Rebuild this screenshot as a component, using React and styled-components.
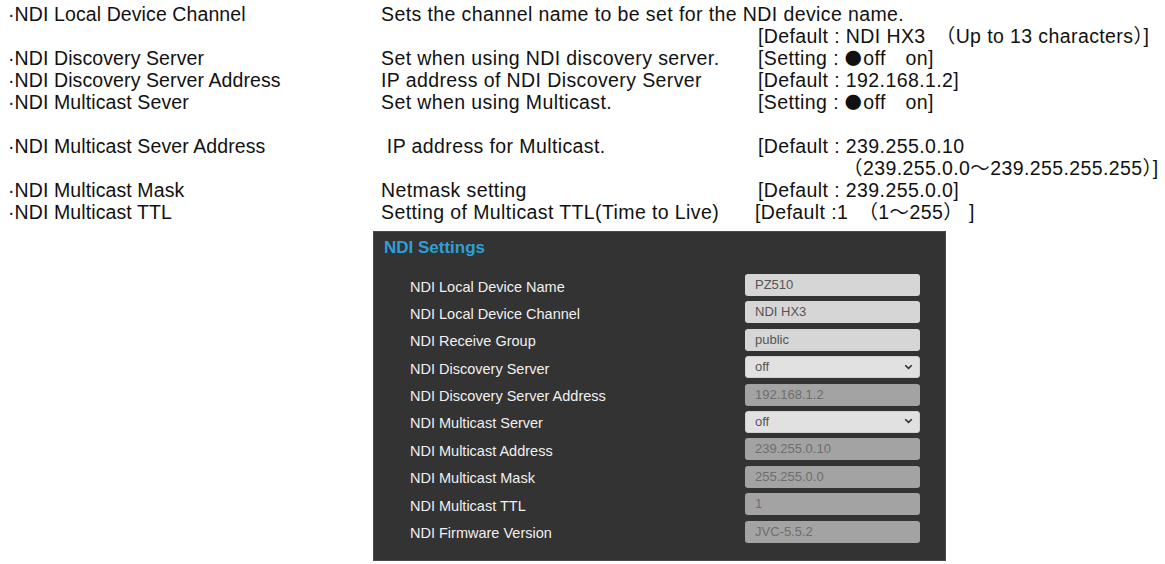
import React from 'react';
import styled, { createGlobalStyle } from 'styled-components';

const GlobalStyle = createGlobalStyle`
  body {
    margin: 0;
    background: #ffffff;
    font-family: 'Liberation Sans', Arial, sans-serif;
  }
`;

const Bullet = styled.span`
  font-family: 'Noto Sans CJK JP', sans-serif;
  font-size: 17px;
  margin-right: 1px;
`;

const onOff = (
  <>
    [Setting : <Bullet>●</Bullet>off　on]
  </>
);

const specRows = [
  { name: '·NDI Local Device Channel', desc: 'Sets the channel name to be set for the NDI device name.', value: '', wide: true },
  { name: '', desc: '', value: '[Default : NDI HX3　（Up to 13 characters）]' },
  { name: '·NDI Discovery Server', desc: 'Set when using NDI discovery server.', value: onOff },
  { name: '·NDI Discovery Server Address', desc: 'IP address of NDI Discovery Server', value: '[Default : 192.168.1.2]' },
  { name: '·NDI Multicast Sever', desc: 'Set when using Multicast.', value: onOff },
  { name: '', desc: '', value: '' },
  { name: '·NDI Multicast Sever Address', desc: ' IP address for Multicast.', value: '[Default : 239.255.0.10' },
  { name: '', desc: '', value: '（239.255.0.0～239.255.255.255）]', cont: true },
  { name: '·NDI Multicast Mask', desc: 'Netmask setting', value: '[Default : 239.255.0.0]' },
  { name: '·NDI Multicast TTL', desc: 'Setting of Multicast TTL(Time to Live)', value: '[Default :1　（1～255） ]', shift: true },
];

const settings = [
  { label: 'NDI Local Device Name', value: 'PZ510', kind: 'text' },
  { label: 'NDI Local Device Channel', value: 'NDI HX3', kind: 'text' },
  { label: 'NDI Receive Group', value: 'public', kind: 'text' },
  { label: 'NDI Discovery Server', value: 'off', kind: 'select' },
  { label: 'NDI Discovery Server Address', value: '192.168.1.2', kind: 'disabled' },
  { label: 'NDI Multicast Server', value: 'off', kind: 'select' },
  { label: 'NDI Multicast Address', value: '239.255.0.10', kind: 'disabled' },
  { label: 'NDI Multicast Mask', value: '255.255.0.0', kind: 'disabled' },
  { label: 'NDI Multicast TTL', value: '1', kind: 'disabled' },
  { label: 'NDI Firmware Version', value: 'JVC-5.5.2', kind: 'disabled' },
];

const Chevron = () => (
  <svg width="9" height="6" viewBox="0 0 9 6">
    <path d="M1.2 1.2 L4.5 4.4 L7.8 1.2" fill="none" stroke="#333" strokeWidth="1.6" />
  </svg>
);

const App = () => {
  return (
    <Page>
      <GlobalStyle />
      <SpecTable>
        {specRows.map((r, i) => (
          <SpecRow key={i}>
            <NameCell>{r.name}</NameCell>
            {r.wide ? (
              <WideCell>{r.desc}</WideCell>
            ) : (
              <>
                <DescCell>{r.desc}</DescCell>
                <ValueCell $cont={r.cont} $shift={r.shift}>{r.value}</ValueCell>
              </>
            )}
          </SpecRow>
        ))}
      </SpecTable>
      <PanelWrap>
        <Panel>
          <PanelTitle>NDI Settings</PanelTitle>
          <FieldList>
            {settings.map((s) => (
              <FieldRow key={s.label}>
                <FieldLabel>{s.label}</FieldLabel>
                <Field $kind={s.kind}>
                  <span>{s.value}</span>
                  {s.kind === 'select' && <Chevron />}
                </Field>
              </FieldRow>
            ))}
          </FieldList>
        </Panel>
      </PanelWrap>
    </Page>
  );
};

const Page = styled.div`
  width: 1165px;
  height: 564px;
  background: #ffffff;
  overflow: hidden;
`;

const SpecTable = styled.div`
  display: flex;
  flex-direction: column;
  padding: 3px 0 0 8px;
  font-family: 'Liberation Sans', 'Noto Sans CJK JP', sans-serif;
  font-size: 19.5px;
  letter-spacing: 0.4px;
  color: #111;
`;

const SpecRow = styled.div`
  display: grid;
  grid-template-columns: 373px 377px 1fr;
  height: 22px;
  line-height: 22px;
  white-space: pre;
`;

const NameCell = styled.div`
  letter-spacing: 0.1px;
`;

const DescCell = styled.div``;

const WideCell = styled.div`
  grid-column: 2 / 4;
`;

const ValueCell = styled.div`
  padding-left: ${(p) => (p.$cont ? '85px' : '0')};
  margin-left: ${(p) => (p.$shift ? '-3px' : '0')};
`;

const PanelWrap = styled.div`
  display: flex;
  padding: 8px 0 0 373px;
`;

const Panel = styled.div`
  width: 573px;
  height: 330px;
  box-sizing: border-box;
  background: #333333;
  border: 1px solid #4a4a4a;
  padding: 6px 0 0 10px;
  font-family: 'Liberation Sans', Arial, sans-serif;
`;

const PanelTitle = styled.div`
  color: #2d9fd6;
  font-weight: bold;
  font-size: 17px;
  line-height: 20px;
  margin-bottom: 16px;
`;

const FieldList = styled.div`
  display: flex;
  flex-direction: column;
  gap: 5.4px;
  padding-left: 26px;
`;

const FieldRow = styled.div`
  display: grid;
  grid-template-columns: 335px 175px;
  align-items: center;
  height: 22px;
`;

const FieldLabel = styled.div`
  color: #f0f0f0;
  font-size: 14.5px;
  padding-top: 3px;
`;

const Field = styled.div`
  height: 22px;
  box-sizing: border-box;
  border-radius: 3px;
  display: flex;
  align-items: center;
  justify-content: space-between;
  padding: 0 6px 1px 9px;
  font-size: 13px;
  color: ${(p) => (p.$kind === 'disabled' ? '#6e6e6e' : '#555')};
  background: ${(p) =>
    p.$kind === 'disabled' ? '#a3a3a3' : p.$kind === 'select' ? '#e1e1e1' : '#d6d6d6'};
  border: 1px solid ${(p) => (p.$kind === 'select' ? '#cfcfcf' : 'transparent')};
`;

export default App;
